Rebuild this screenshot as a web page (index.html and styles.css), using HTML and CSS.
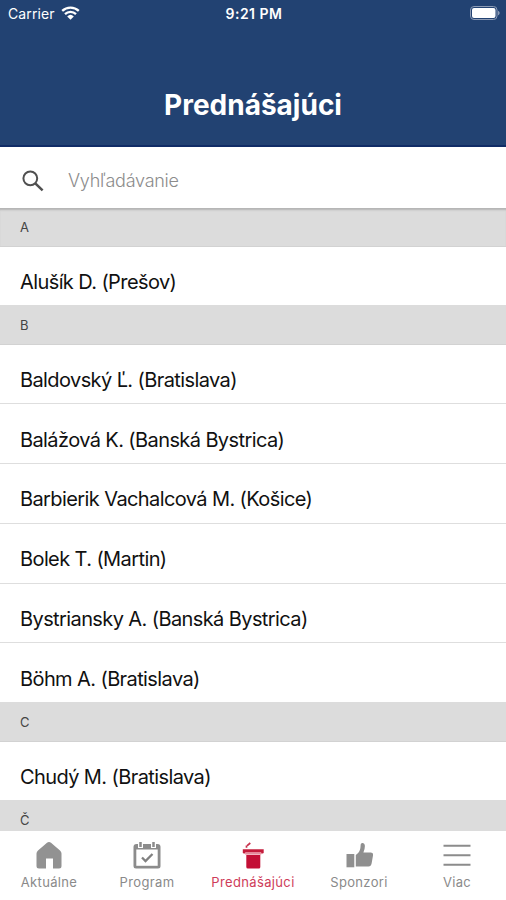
FILE: index.html
```
<!DOCTYPE html>
<html lang="sk">
<head>
    <meta charset="UTF-8">
    <meta name="viewport" content="width=device-width, initial-scale=1.0">
    <title>Prednášajúci</title>
    <link rel="stylesheet" href="styles.css">
</head>
<body>
    <header class="header">
        <div class="status-bar">
            <div class="carrier">
                <span>Carrier</span>
                <svg class="wifi" viewBox="0 0 19 14">
                    <path d="M1.2 4.9a12 12 0 0 1 16.6 0M4 8.1a7.9 7.9 0 0 1 11 0" fill="none" stroke="#fff" stroke-width="2.3"/>
                    <path d="M6.2 10.4a4.8 4.8 0 0 1 6.6 0L9.5 13.8z" fill="#fff"/>
                </svg>
            </div>
            <div class="clock">9:21 PM</div>
            <svg class="battery" viewBox="0 0 31 14">
                <rect x="1.5" y=".5" width="26.5" height="13" rx="3.5" fill="none" stroke="#8c9bb5"/>
                <rect x="3" y="2" width="23.5" height="10" rx="2" fill="#fff"/>
                <path d="M29 4.7c2.2.8 2.2 3.8 0 4.6z" fill="#8c9bb5"/>
            </svg>
        </div>
        <h1>Prednášajúci</h1>
    </header>

    <div class="search">
        <svg class="search-icon" viewBox="0 0 22 22">
            <circle cx="8.3" cy="8.3" r="6.9" fill="none" stroke="#505050" stroke-width="2"/>
            <path d="M13.3 13.3l7.3 7.1" stroke="#505050" stroke-width="2.5"/>
        </svg>
        <span>Vyhľadávanie</span>
    </div>

    <main class="list">
        <h2 class="first">A</h2>
        <ul class="short">
            <li>Alušík D. (Prešov)</li>
        </ul>
        <h2>B</h2>
        <ul>
            <li>Baldovský Ľ. (Bratislava)</li>
            <li>Balážová K. (Banská Bystrica)</li>
            <li>Barbierik Vachalcová M. (Košice)</li>
            <li>Bolek T. (Martin)</li>
            <li>Bystriansky A. (Banská Bystrica)</li>
            <li>Böhm A. (Bratislava)</li>
        </ul>
        <h2>C</h2>
        <ul class="short">
            <li>Chudý M. (Bratislava)</li>
        </ul>
        <h2>Č</h2>
    </main>

    <nav class="tabs">
        <div class="tab">
            <svg viewBox="0 0 28 28">
                <path d="M14 1q1.1 0 2 .8L25 9.6q1.5 1.3 1.5 3V25q0 2.5-2.500 2.500h-6V17.500h-7V27.500H4q-2.500 0-2.500-2.500V12.600q0-1.700 1.500-3L12 1.800q.9-.8 2-.8z" fill="#929292"/>
            </svg>
            <span>Aktuálne</span>
        </div>
        <div class="tab">
            <svg viewBox="0 0 28 28">
                <path d="M3.500 3h21q3 0 3 3V25q0 2.500-2.500 2.500H3Q.5 27.500.5 25V6q0-3 3-3z" fill="#8c8c8c"/>
                <path d="M3.300 8.500h21.400v16.300H3.300z" fill="#fff"/>
                <path d="M7.500 1v6M20.500 1v6" stroke="#fff" stroke-width="5"/>
                <path d="M7.500 1v5M20.500 1v5" stroke="#8c8c8c" stroke-width="2.500"/>
                <path d="M9 16.500l3.500 3.500 7-7" fill="none" stroke="#808080" stroke-width="2.300"/>
            </svg>
            <span>Program</span>
        </div>
        <div class="tab active">
            <svg viewBox="0 0 28 28">
                <path d="M3.800 8.300h20.900v3q0 1.300-1.200 1.300H5q-1.200 0-1.200-1.300z" fill="#c41c3b"/>
                <path d="M6.500 11.500V13.500H22V11.500z" fill="none" stroke="#f0a0ae" stroke-width=".8"/>
                <path d="M7.300 14h14v12q0 1.500-1.500 1.500h-11q-1.500 0-1.500-1.500z" fill="#c30f35"/>
                <path d="M7.500 6.800V4.600M8.200 4.600L11.300 2" fill="none" stroke="#c8304c" stroke-width="1.700"/>
            </svg>
            <span>Prednášajúci</span>
        </div>
        <div class="tab">
            <svg viewBox="0 0 28 28">
                <path d="M1.500 13h7.800v13.300H1.500z" fill="#8f8f8f"/>
                <path d="M10.800 14c2.700-1.800 4.200-4 4.600-7l.3-3.500C15.900 1.300 19.900 1 19.900 5q0 3-1.500 6.500h7.500q2.700.2 2.100 3l-1.400 8Q26 25.500 23.500 25.500H10.800z" fill="#8f8f8f"/>
            </svg>
            <span>Sponzori</span>
        </div>
        <div class="tab">
            <svg viewBox="0 0 28 28">
                <path d="M.5 4.800h27M.5 14.300h27M.5 23.800h27" stroke="#8c8c8c" stroke-width="2"/>
            </svg>
            <span>Viac</span>
        </div>
    </nav>
</body>
</html>
```

FILE: styles.css
```
* {
    box-sizing: border-box;
}

body {
    display: flex;
    flex-direction: column;
    height: 900px;
    margin: 0;
    overflow: hidden;
    background: #fff;
    font-family: Inter, "Liberation Sans", sans-serif;
}

.header {
    height: 147px;
    flex: none;
    background: #224272;
    border-bottom: 2px solid #102c66;
    color: #fff;
}

.status-bar {
    display: grid;
    grid-template-columns: 1fr auto 1fr;
    align-items: center;
    height: 26px;
    padding: 0 6px 0 8px;
    font-size: 14px;
}

.carrier {
    display: flex;
    align-items: center;
    gap: 6px;
    letter-spacing: 0.1px;
}

.wifi {
    width: 19px;
    height: 14px;
}

.clock {
    font-size: 14px;
    font-weight: 600;
    letter-spacing: 0.5px;
}

.battery {
    width: 31px;
    height: 14px;
    justify-self: end;
}

h1 {
    margin: 62px 0 0;
    text-align: center;
    font-size: 28px;
    line-height: 34px;
    font-weight: 700;
}

.search {
    display: flex;
    align-items: center;
    gap: 24px;
    flex: none;
    height: 61px;
    padding: 5px 22px 0;
    color: #8c8c8c;
    font-size: 18px;
    font-weight: 300;
    letter-spacing: -0.25px;
}

.search-icon {
    width: 22px;
    height: 22px;
    margin-top: 1px;
}

.list {
    flex: 1;
    min-height: 0;
    overflow: hidden;
}

h2 {
    height: 39.5px;
    margin: 0;
    padding-left: 20px;
    background: #dcdcdc;
    border-bottom: 1px solid #d2d2d2;
    color: #444;
    font-size: 13px;
    line-height: 40px;
    font-weight: 400;
}

h2.first {
    height: 39px;
    line-height: 39px;
    box-shadow: inset 0 3px 2px -1px #b4b4b4;
}

ul {
    margin: 0;
    padding: 0;
    list-style: none;
}

li {
    height: 59.8px;
    padding: 10.4px 20px 0;
    border-bottom: 1px solid #dedede;
    color: #111;
    font-size: 20px;
    line-height: 51px;
    letter-spacing: -0.6px;
    white-space: nowrap;
}

li:last-child {
    height: 58.6px;
    border-bottom: 0;
}

.short li:last-child {
    height: 58px;
    padding-top: 10px;
}

.tabs {
    display: flex;
    flex: none;
    height: 69px;
    padding-top: 10px;
    background: #fff;
}

.tab {
    display: flex;
    flex-direction: column;
    align-items: center;
    width: 98px;
    color: #8a8a8a;
    font-size: 13px;
    line-height: 16px;
    letter-spacing: 0.35px;
}

.tab svg {
    width: 28px;
    height: 28px;
    margin-bottom: 5px;
}

.tab.active {
    width: 114px;
    color: #ce3c59;
}
```
